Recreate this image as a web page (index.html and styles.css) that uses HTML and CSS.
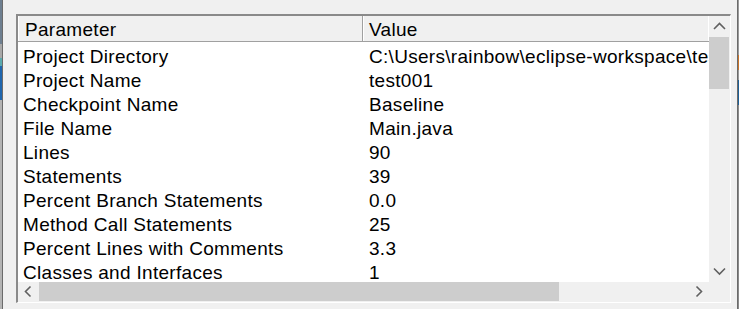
FILE: index.html
```html
<!DOCTYPE html>
<html>
<head>
<meta charset="utf-8">
<link rel="stylesheet" href="styles.css">
</head>
<body>
<div class="frame-left"></div>
<div class="main">
  <div class="listbox">
    <div class="list">
      <div class="header">
        <div class="hcell hcell-param">Parameter</div>
        <div class="hcell hcell-value">Value</div>
      </div>
      <div class="rows">
        <div class="row"><span class="c1">Project Directory</span><span class="c2">C:\Users\rainbow\eclipse-workspace\test001</span></div>
        <div class="row"><span class="c1">Project Name</span><span class="c2">test001</span></div>
        <div class="row"><span class="c1">Checkpoint Name</span><span class="c2">Baseline</span></div>
        <div class="row"><span class="c1">File Name</span><span class="c2">Main.java</span></div>
        <div class="row"><span class="c1">Lines</span><span class="c2">90</span></div>
        <div class="row"><span class="c1">Statements</span><span class="c2">39</span></div>
        <div class="row"><span class="c1">Percent Branch Statements</span><span class="c2">0.0</span></div>
        <div class="row"><span class="c1">Method Call Statements</span><span class="c2">25</span></div>
        <div class="row"><span class="c1">Percent Lines with Comments</span><span class="c2">3.3</span></div>
        <div class="row"><span class="c1">Classes and Interfaces</span><span class="c2">1</span></div>
      </div>
    </div>
    <div class="vscroll">
      <div class="sbtn"><svg width="21" height="21" viewBox="0 0 21 21"><path d="M5 13 L10.5 7.5 L16 13" fill="none" stroke="#606060" stroke-width="1.6"/></svg></div>
      <div class="vtrack"><div class="vthumb"></div></div>
      <div class="sbtn"><svg width="21" height="21" viewBox="0 0 21 21"><path d="M5 7.5 L10.5 13 L16 7.5" fill="none" stroke="#606060" stroke-width="1.6"/></svg></div>
    </div>
    <div class="hscroll">
      <div class="hbtn"><svg width="21" height="20" viewBox="0 0 21 20"><path d="M12.5 4.5 L7.5 9.5 L12.5 14.5" fill="none" stroke="#606060" stroke-width="1.6"/></svg></div>
      <div class="htrack"><div class="hthumb"></div></div>
      <div class="hbtn"><svg width="21" height="20" viewBox="0 0 21 20"><path d="M8.5 4.5 L13.5 9.5 L8.5 14.5" fill="none" stroke="#606060" stroke-width="1.6"/></svg></div>
    </div>
    <div class="corner"></div>
  </div>
</div>
<div class="frame-right"></div>
</body>
</html>
```

FILE: styles.css
```css
html, body {
  margin: 0;
  padding: 0;
}
body {
  width: 739px;
  height: 309px;
  overflow: hidden;
  display: flex;
  background: #f0f0f0;
  font-family: "Liberation Sans", Arial, sans-serif;
  font-size: 19px;
  letter-spacing: 0.3px;
  color: #000;
}
.frame-left {
  width: 2px;
  border-right: 1px solid #6b6b6b;
  background: linear-gradient(to bottom,
    #6e7f90 0px, #6e7f90 44px,
    #a8a8a8 44px, #a8a8a8 58px,
    #5aa9ad 58px, #5aa9ad 66px,
    #1f66ad 66px, #1f66ad 100px,
    #b4b4b4 100px, #b4b4b4 309px);
}
.main {
  flex: 1;
  padding: 14px 6px 0 13px;
}
.frame-right {
  width: 1px;
  border-left: 1px solid #6b6b6b;
  background: linear-gradient(to bottom,
    #9a9a9a 0px, #9a9a9a 55px,
    #c8742a 55px, #c8742a 70px,
    #9a9a9a 70px, #9a9a9a 80px,
    #1f5f95 80px, #1f5f95 105px,
    #8a8a8a 105px, #8a8a8a 309px);
}
.listbox {
  width: 712px;
  height: 286px;
  border-top: 2px solid #8a8a8a;
  border-left: 2px solid #8a8a8a;
  border-right: 1px solid #ffffff;
  border-bottom: 1px solid #ffffff;
  display: grid;
  grid-template-columns: 691px 21px;
  grid-template-rows: 266px 20px;
  background: #f0f0f0;
}
.list {
  overflow: hidden;
  background: #fff;
  display: flex;
  flex-direction: column;
}
.header {
  display: flex;
  flex: none;
  height: 25px;
  border-bottom: 1px solid #a0a0a0;
  background: #f0f0f0;
}
.hcell {
  line-height: 24px;
  padding-top: 2px;
  white-space: nowrap;
  box-shadow: inset 1px 0 0 #ffffff;
}
.hcell-param {
  width: 337px;
  padding-left: 7px;
  border-right: 1px solid #a0a0a0;
}
.hcell-value {
  flex: 1;
  padding-left: 6px;
  border-right: 1px solid #ffffff;
}
.rows {
  padding-top: 3px;
  overflow: hidden;
}
.row {
  display: grid;
  grid-template-columns: 345px 1fr;
  line-height: 24px;
  height: 24px;
  white-space: nowrap;
}
.c1 {
  padding-left: 5px;
  overflow: hidden;
}
.c2 {
  padding-left: 6px;
  overflow: hidden;
}
.vscroll {
  display: flex;
  flex-direction: column;
  background: #f0f0f0;
}
.sbtn {
  height: 21px;
  flex: none;
}
.sbtn svg, .hbtn svg {
  display: block;
}
.vtrack {
  flex: 1;
}
.vthumb {
  width: 20px;
  height: 52px;
  background: #cdcdcd;
}
.hscroll {
  display: flex;
  background: #f0f0f0;
}
.hbtn {
  width: 21px;
  flex: none;
}
.htrack {
  flex: 1;
}
.hthumb {
  width: 520px;
  height: 19px;
  background: #cdcdcd;
}
.corner {
  background: #f0f0f0;
}
```
